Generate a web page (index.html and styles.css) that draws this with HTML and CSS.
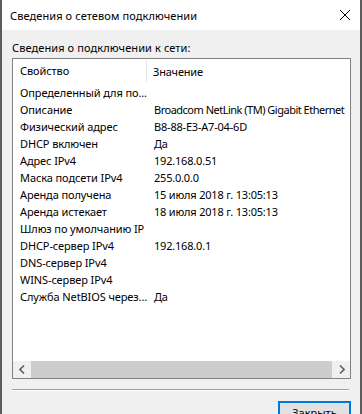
FILE: index.html
```html
<!DOCTYPE html>
<html lang="ru">
<head>
    <meta charset="UTF-8">
    <meta name="viewport" content="width=device-width, initial-scale=1.0">
    <title>Сведения о сетевом подключении</title>
    <link rel="stylesheet" href="styles.css">
</head>
<body>
    <div class="window">
        <div class="titlebar">
            <span class="title">Сведения о сетевом подключении</span>
            <svg class="close" width="12" height="12" viewBox="0 0 12 12">
                <path d="M1 1 L11 11 M11 1 L1 11" stroke="#000" stroke-width="1" fill="none"/>
            </svg>
        </div>
        <div class="content">
            <div class="label">Сведения о подключении к сети:</div>
            <div class="listbox">
                <div class="list-area">
                    <div class="row header">
                        <div class="col-name">Свойство</div>
                        <div class="col-value">Значение</div>
                    </div>
                    <div class="row"><div class="col-name">Определенный для по...</div><div class="col-value"></div></div>
                    <div class="row"><div class="col-name">Описание</div><div class="col-value long">Broadcom NetLink (TM) Gigabit Ethernet</div></div>
                    <div class="row"><div class="col-name">Физический адрес</div><div class="col-value">B8-88-E3-A7-04-6D</div></div>
                    <div class="row"><div class="col-name">DHCP включен</div><div class="col-value">Да</div></div>
                    <div class="row"><div class="col-name">Адрес IPv4</div><div class="col-value">192.168.0.51</div></div>
                    <div class="row"><div class="col-name">Маска подсети IPv4</div><div class="col-value">255.0.0.0</div></div>
                    <div class="row"><div class="col-name">Аренда получена</div><div class="col-value">15 июля 2018 г. 13:05:13</div></div>
                    <div class="row"><div class="col-name">Аренда истекает</div><div class="col-value">18 июля 2018 г. 13:05:13</div></div>
                    <div class="row"><div class="col-name">Шлюз по умолчанию IP</div><div class="col-value"></div></div>
                    <div class="row"><div class="col-name">DHCP-сервер IPv4</div><div class="col-value">192.168.0.1</div></div>
                    <div class="row"><div class="col-name">DNS-сервер IPv4</div><div class="col-value"></div></div>
                    <div class="row"><div class="col-name">WINS-сервер IPv4</div><div class="col-value"></div></div>
                    <div class="row"><div class="col-name">Служба NetBIOS через...</div><div class="col-value">Да</div></div>
                </div>
                <div class="hscroll">
                    <div class="arrow">
                        <svg width="6" height="9" viewBox="0 0 6 9"><path d="M5 0.5 L1 4.5 L5 8.5" stroke="#606060" stroke-width="1.6" fill="none"/></svg>
                    </div>
                    <div class="track"><div class="thumb"></div></div>
                    <div class="arrow">
                        <svg width="6" height="9" viewBox="0 0 6 9"><path d="M1 0.5 L5 4.5 L1 8.5" stroke="#606060" stroke-width="1.6" fill="none"/></svg>
                    </div>
                </div>
            </div>
            <div class="separator"></div>
            <div class="buttons">
                <button class="btn">Закрыть</button>
            </div>
        </div>
    </div>
</body>
</html>
```

FILE: styles.css
```css
body {
    margin: 0;
    font-family: 'Noto Sans', 'Open Sans', sans-serif;
    font-size: 11px;
    color: #000;
    background: #f0f0f0;
}
.window {
    width: 362px;
    height: 414px;
    box-sizing: border-box;
    border-left: 2px solid #5c5c5c;
    border-right: 2px solid #5c5c5c;
    background: #f0f0f0;
    overflow: hidden;
}
.titlebar {
    height: 30px;
    background: #fff;
    display: flex;
    align-items: center;
    justify-content: space-between;
    padding: 0 9px 0 8px;
}
.title {
    line-height: 15px;
    letter-spacing: 0.1px;
}
.close {
    display: block;
}
.content {
    padding: 10px 0 0 10px;
}
.label {
    line-height: 15px;
    margin-bottom: 3px;
    letter-spacing: 0.1px;
}
.listbox {
    width: 339px;
    height: 321px;
    box-sizing: border-box;
    border: 1px solid #828282;
    background: #fff;
    display: flex;
    flex-direction: column;
}
.list-area {
    flex: 1;
}
.row {
    display: flex;
    height: 17px;
    line-height: 17px;
    white-space: nowrap;
}
.row.header {
    height: 25px;
    line-height: 25px;
}
.col-name {
    flex-shrink: 0;
    width: 134px;
    box-sizing: border-box;
    padding-left: 7px;
    letter-spacing: -0.1px;
}
.col-value {
    flex-shrink: 0;
    padding-left: 7px;
    letter-spacing: -0.2px;
}
.col-value.long {
    letter-spacing: -0.5px;
}
.header .col-name {
    border-right: 1px solid #e5e5e5;
    margin: 1px 0 2px;
    line-height: 22px;
}
.header .col-value {
    padding-left: 6px;
}
.hscroll {
    height: 17px;
    display: flex;
    background: #f0f0f0;
}
.arrow {
    width: 17px;
    display: flex;
    align-items: center;
    justify-content: center;
}
.track {
    flex: 1;
    padding: 0 1px;
}
.thumb {
    height: 17px;
    background: #cdcdcd;
}
.separator {
    width: 337px;
    margin-top: 10px;
    border-top: 1px solid #a0a0a0;
    border-bottom: 1px solid #fff;
}
.buttons {
    display: flex;
    justify-content: flex-end;
    width: 339px;
    margin-top: 10px;
}
.btn {
    width: 73px;
    height: 23px;
    font-family: inherit;
    font-size: 11px;
    background: #e1e1e1;
    border: 2px solid #0078d7;
    padding: 0;
    color: #000;
}
```
